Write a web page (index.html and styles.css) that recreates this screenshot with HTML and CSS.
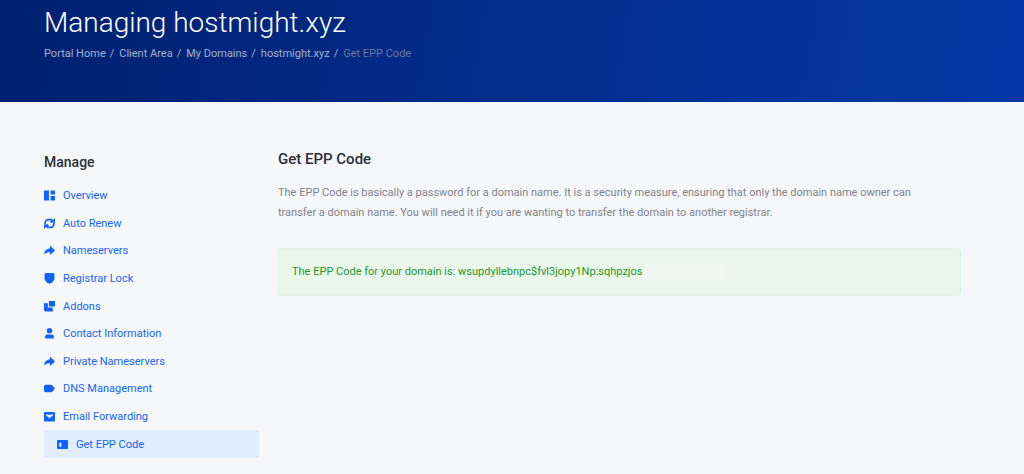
FILE: index.html
```html
<!DOCTYPE html>
<html lang="en">
<head>
  <meta charset="UTF-8">
  <meta name="viewport" content="width=device-width, initial-scale=1.0">
  <title>Get EPP Code - hostmight.xyz</title>
  <link rel="stylesheet" href="styles.css">
</head>
<body>
  <header class="page-header">
    <h1>Managing hostmight.xyz</h1>
    <nav aria-label="Breadcrumb">
      <ol class="breadcrumb">
        <li><a href="#">Portal Home</a></li>
        <li><a href="#">Client Area</a></li>
        <li><a href="#">My Domains</a></li>
        <li><a href="#">hostmight.xyz</a></li>
        <li class="current">Get EPP Code</li>
      </ol>
    </nav>
  </header>

  <div class="container">
    <aside class="sidebar">
      <h2>Manage</h2>
      <ul class="menu">
        <li><a href="#">
          <svg class="icon" viewBox="0 0 20 20"><path d="M0 1h9v18H0zM12 1h8v7h-8zM12 11h8v8h-8z"/></svg>
          Overview</a></li>
        <li><a href="#">
          <svg class="icon" viewBox="0 0 20 20"><path class="line" d="M2 12V9a6 6 0 0 1 6-6h7M18 8v3a6 6 0 0 1-6 6H5"/><path d="M12 8l8-8v8zM8 12l-8 8v-8z"/><path class="line" d="M4 16l4-4M16 4l-4 4"/></svg>
          Auto Renew</a></li>
        <li><a href="#">
          <svg class="icon" viewBox="0 0 20 20"><path d="M11 1l9 9-9 8v-5C6 13 3 14 0 17c1-7 5-10 11-11z"/></svg>
          Nameservers</a></li>
        <li><a href="#">
          <svg class="icon" viewBox="0 0 20 20"><path d="M3 0h14l2 2v10l-5 6h-2l-2 2-2-2H6l-5-6V2z"/></svg>
          Registrar Lock</a></li>
        <li><a href="#">
          <svg class="icon" viewBox="0 0 20 20"><path d="M9 0h11v10H9zM0 4h7v8h9v7H2l-2-2z"/></svg>
          Addons</a></li>
        <li><a href="#">
          <svg class="icon" viewBox="0 0 20 20"><circle cx="10" cy="5" r="5"/><path d="M2 19v-3c0-3 2-4 5-4h6c3 0 5 1 5 4v3z"/></svg>
          Contact Information</a></li>
        <li><a href="#">
          <svg class="icon" viewBox="0 0 20 20"><path d="M11 1l9 9-9 8v-5C6 13 3 14 0 17c1-7 5-10 11-11z"/></svg>
          Private Nameservers</a></li>
        <li><a href="#">
          <svg class="icon" viewBox="0 0 20 20"><path d="M2 3h12l6 7-6 7H2l-2-2V5z"/></svg>
          DNS Management</a></li>
        <li><a href="#">
          <svg class="icon" viewBox="0 0 20 20"><path fill-rule="evenodd" d="M1 2h18l1 1v15l-1 1H1l-1-1V3zM4 5v3l6 5 6-5V5l-3 2H7z"/></svg>
          Email Forwarding</a></li>
        <li><a class="active" href="#" aria-current="page">
          <svg class="icon" viewBox="0 0 20 20"><path fill-rule="evenodd" d="M1 2h18l1 1v14l-1 1H1l-1-1V3zM4 7v7h4V7z"/></svg>
          Get EPP Code</a></li>
      </ul>
    </aside>

    <main class="content">
      <h2>Get EPP Code</h2>
      <p>The EPP Code is basically a password for a domain name. It is a security measure, ensuring that only the domain name owner can<br>
        transfer a domain name. You will need it if you are wanting to transfer the domain to another registrar.</p>
      <div class="alert">The EPP Code for your domain is: wsupdyllebnpc$fvl3jopy1Np:sqhpzjos<span class="redacted"></span></div>
    </main>
  </div>
</body>
</html>
```

FILE: styles.css
```css
* { box-sizing: border-box; }
body { margin: 0; font-family: Roboto, "Liberation Sans", sans-serif; font-size: 11px; color: #7f8389; background-color: #f6f7f9; }
h1, h2, p, ul, ol { margin: 0; padding: 0; }
ul, ol { list-style: none; }
a { color: inherit; text-decoration: none; }

.page-header { padding: 4px 44px 39px; background: linear-gradient(100deg, #002070, #0639a8); }
.page-header h1 { font-size: 28px; font-weight: 300; line-height: 38px; color: #fff; }
.breadcrumb { display: flex; flex-wrap: wrap; padding-top: 3px; line-height: 18px; color: #a5b1cc; }
.breadcrumb li + li::before { content: "/"; padding: 0 5px 0 4px; }
.breadcrumb .current { color: #6b7a9b; }
.breadcrumb .current::before { color: #a5b1cc; }

.container { display: flex; gap: 19px; padding: 47px 63px 16px 44px; }
.container h2 { font-weight: 500; color: #2b2f38; }
.sidebar { flex: 0 0 215px; padding-top: 3px; }
.sidebar h2 { font-size: 14px; line-height: 20px; }
.menu { display: flex; flex-direction: column; min-height: 276px; margin-top: 10px; }
.menu li { display: flex; flex: 1; }
.menu a { display: flex; flex: 1; align-items: center; gap: 8px; border-radius: 2px; color: #1565f9; }
.menu .active { padding-left: 13px; background-color: #e1edfc; }
.icon { width: 11px; height: 11px; fill: #1062fe; }
.icon .line { fill: none; stroke: #1062fe; stroke-width: 3; }

.content { flex: 1; min-width: 0; }
.content h2 { font-size: 15px; line-height: 20px; }
.content p { margin-top: 14px; line-height: 20px; }
.alert { display: flex; align-items: center; margin-top: 25px; padding: 13px; border: 1px solid #e3f3e5; border-radius: 3px; line-height: 20px; color: #26962a; background-color: #ebf6eb; }
.redacted { width: 82px; height: 16px; border-radius: 4px; background-color: #eff8f2; }
```
